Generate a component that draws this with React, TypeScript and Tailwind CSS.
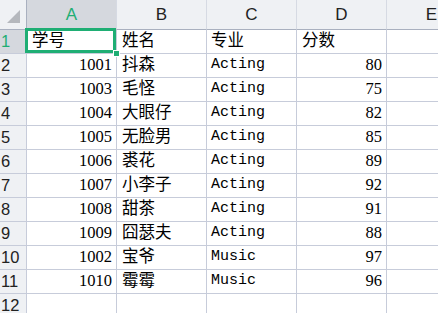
const rows: [string, string, string, string][] = [
  ["1001", "抖森", "Acting", "80"],
  ["1003", "毛怪", "Acting", "75"],
  ["1004", "大眼仔", "Acting", "82"],
  ["1005", "无脸男", "Acting", "85"],
  ["1006", "裘花", "Acting", "89"],
  ["1007", "小李子", "Acting", "92"],
  ["1008", "甜茶", "Acting", "91"],
  ["1009", "囧瑟夫", "Acting", "88"],
  ["1002", "宝爷", "Music", "97"],
  ["1010", "霉霉", "Music", "96"],
];

const cols = ["A", "B", "C", "D", "E"];

const cell =
  "h-[24px] border-r border-b border-[#c7ccda] flex items-center overflow-hidden whitespace-nowrap";
const cjk = "font-['Liberation_Serif','Noto_Sans_CJK_SC',serif] text-[16.5px]";
const mono = "font-['Liberation_Mono',monospace] text-[15px]";
const num = "font-['Liberation_Serif',serif] text-[16.5px] justify-end pr-[4px]";

function RowHead({ n, active }: { n: number; active?: boolean }) {
  return (
    <div
      className={`h-[24px] border-r border-b border-[#c7ccda] flex items-center pl-[1px] text-[16.5px] font-['Liberation_Sans',sans-serif] ${
        active ? "bg-[#d5d8de] text-[#1fae74]" : "bg-[#eff1f4] text-[#222]"
      }`}
    >
      {n}
    </div>
  );
}

export default function App() {
  return (
    <div className="w-[438px] h-[313px] overflow-hidden bg-white relative text-black">
      <div className="grid grid-cols-[27px_90px_90px_90px_90px_90px] w-[477px]">
        {/* corner */}
        <div className="h-[30px] bg-[#eff1f4] border-r border-b border-[#a9b0bf] relative">
          <svg className="absolute left-[7px] top-[10px]" width="13" height="13" viewBox="0 0 13 13">
            <polygon points="13,0 13,13 0,13" fill="#b5b8bd" />
          </svg>
        </div>
        {cols.map((c) => (
          <div
            key={c}
            className={`h-[30px] border-r border-b border-r-[#d6dae3] border-b-[#a9b0bf] flex items-center justify-center text-[17px] font-['Liberation_Sans',sans-serif] ${
              c === "A" ? "bg-[#d5d8de] text-[#1fae74]" : "bg-[#eff1f4] text-[#222]"
            }`}
          >
            {c}
          </div>
        ))}

        {/* header row */}
        <RowHead n={1} active />
        <div className={`${cell} ${cjk} pl-[5px]`}>学号</div>
        <div className={`${cell} ${cjk} pl-[5px]`}>姓名</div>
        <div className={`${cell} ${cjk} pl-[4px]`}>专业</div>
        <div className={`${cell} ${cjk} pl-[5px]`}>分数</div>
        <div className={cell}></div>

        {rows.map((r, i) => (
          <>
            <RowHead key={"h" + i} n={i + 2} />
            <div className={`${cell} ${num}`}>{r[0]}</div>
            <div className={`${cell} ${cjk} pl-[5px]`}>{r[1]}</div>
            <div className={`${cell} ${mono} pl-[4px]`}>{r[2]}</div>
            <div className={`${cell} ${num}`}>{r[3]}</div>
            <div className={cell}></div>
          </>
        ))}

        <RowHead n={12} />
        <div className={cell}></div>
        <div className={cell}></div>
        <div className={cell}></div>
        <div className={cell}></div>
        <div className={cell}></div>
      </div>

      {/* selection on A1 */}
      <div className="absolute left-[25px] top-[28px] w-[91px] h-[25px] border-[3px] border-[#1fae74] pointer-events-none" />
      <div className="absolute left-[113px] top-[50px] w-[5px] h-[5px] bg-[#1fae74] border border-white box-content" />
    </div>
  );
}
